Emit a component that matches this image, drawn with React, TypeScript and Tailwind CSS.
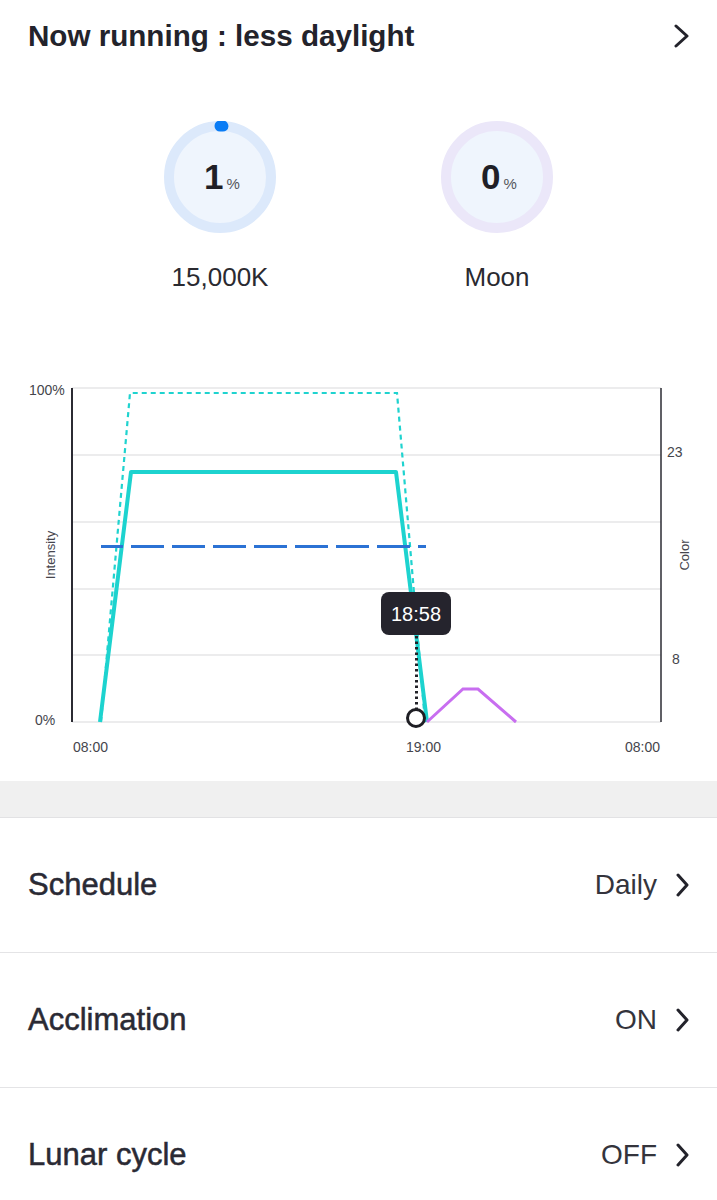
import React from "react";

const font = { fontFamily: '"Liberation Sans", Arial, sans-serif' };

const Chevron = ({ w = 11 }: { w?: number }) => (
  <svg width={w + 3} height="24" viewBox={`0 0 ${w + 3} 24`} fill="none">
    <polyline points={`2,2 ${w},12 2,22`} stroke="#23232b" strokeWidth="3" strokeLinecap="round" strokeLinejoin="round" />
  </svg>
);

const Ring = ({ value, ring, arc }: { value: number; ring: string; arc?: string }) => (
  <div className="relative w-[112px] h-[112px]">
    <svg width="112" height="112" viewBox="0 0 112 112" className="absolute inset-0">
      <circle cx="56" cy="56" r="51" fill="#eff5fd" stroke={ring} strokeWidth="10" />
      {arc && (
        <circle
          cx="56"
          cy="56"
          r="51"
          fill="none"
          stroke={arc}
          strokeWidth="11"
          strokeLinecap="round"
          strokeDasharray="3 400"
          transform="rotate(-90 56 56)"
        />
      )}
    </svg>
    <div className="absolute inset-0 flex items-baseline justify-center pt-[38px] pl-[4px]">
      <span className="text-[35px] leading-none font-bold text-[#1f1f27]">{value}</span>
      <span className="text-[15px] leading-none text-[#55555c] ml-[3px]">%</span>
    </div>
  </div>
);

function Chart() {
  const grid = [388, 455, 522, 589, 655, 722];
  return (
    <svg width="717" height="411" viewBox="0 370 717 411" className="block">
      {grid.map((y) => (
        <line key={y} x1="72" x2="661" y1={y} y2={y} stroke="#d9d9dc" strokeWidth="1.2" />
      ))}
      <line x1="72" x2="72" y1="388" y2="722" stroke="#2b2b33" strokeWidth="2" />
      <line x1="661" x2="661" y1="388" y2="722" stroke="#2b2b33" strokeWidth="1.5" />

      <g fontFamily='"Liberation Sans", Arial, sans-serif' fontSize="14" fill="#45454c">
        <text x="29" y="395">100%</text>
        <text x="35" y="725">0%</text>
        <text x="73" y="752">08:00</text>
        <text x="406" y="752">19:00</text>
        <text x="660" y="752" textAnchor="end">08:00</text>
        <text x="667" y="457">23</text>
        <text x="672" y="664">8</text>
        <text x="55" y="555" fontSize="13" textAnchor="middle" transform="rotate(-90 55 555)">Intensity</text>
        <text x="689" y="555" fontSize="13" textAnchor="middle" transform="rotate(-90 689 555)">Color</text>
      </g>

      <polyline points="101,722 130,393 397,393 425,722" fill="none" stroke="#1fd3cf" strokeWidth="2.2" strokeDasharray="5 4" />
      <polyline points="100,722 131,472 396,472 427,722" fill="none" stroke="#1dd3cf" strokeWidth="4" strokeLinejoin="round" />
      <line x1="101" x2="426" y1="546.5" y2="546.5" stroke="#2b72d4" strokeWidth="3" strokeDasharray="33 8" strokeDashoffset="11" />
      <polyline points="427,722 463,689 478,689 516,722" fill="none" stroke="#c86ef0" strokeWidth="3" />

      <line x1="416.5" x2="416.5" y1="636" y2="709" stroke="#222228" strokeWidth="3" strokeDasharray="2.5 3" />
      <rect x="381" y="592" width="70" height="43" rx="8" fill="#25242d" />
      <text x="416" y="621" textAnchor="middle" fontFamily='"Liberation Sans", Arial, sans-serif' fontSize="20" fill="#ffffff">
        18:58
      </text>
      <circle cx="416" cy="718" r="8.5" fill="#ffffff" stroke="#1e1e24" strokeWidth="3" />
    </svg>
  );
}

const Row = ({ label, value }: { label: string; value: string }) => (
  <div className="h-[135px] border-b border-[#e4e4e6] flex items-center justify-between pl-7 pr-[27px]">
    <span className="text-[31px] text-[#2a2a34] [-webkit-text-stroke:0.5px_#2a2a34]">{label}</span>
    <div className="flex items-center gap-[19px]">
      <span className="text-[28px] text-[#34343c]">{value}</span>
      <Chevron />
    </div>
  </div>
);

export default function App() {
  return (
    <div className="w-[717px] h-[1200px] bg-white overflow-hidden" style={font}>
      <div className="h-[72px] flex items-center justify-between pl-7 pr-[27px]">
        <span className="text-[29.6px] font-bold text-[#23232b]">Now running : less daylight</span>
        <Chevron w={13} />
      </div>

      <div className="h-[298px] pt-[49px] flex justify-center">
        <div className="w-[277px] flex flex-col items-center">
          <Ring value={1} ring="#dce9fb" arc="#0a7cf5" />
          <span className="mt-[25px] text-[26px] text-[#2a2a30]">15,000K</span>
        </div>
        <div className="w-[277px] flex flex-col items-center">
          <Ring value={0} ring="#ebe7f9" />
          <span className="mt-[25px] text-[26px] text-[#2a2a30]">Moon</span>
        </div>
      </div>

      <Chart />

      <div className="h-[37px] bg-[#f0f0f0] border-b border-[#e2e2e4]" />

      <Row label="Schedule" value="Daily" />
      <Row label="Acclimation" value="ON" />
      <Row label="Lunar cycle" value="OFF" />
    </div>
  );
}
